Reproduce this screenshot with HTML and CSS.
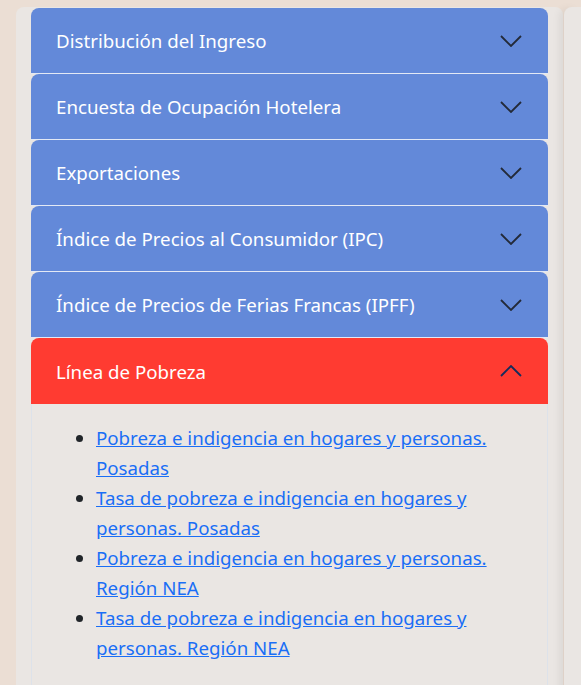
FILE: index.html
```html
<!DOCTYPE html>
<html lang="es">
<head>
<meta charset="utf-8">
<title>Estadísticas</title>
<link rel="stylesheet" href="styles.css">
</head>
<body>
<div class="page">
  <div class="card">
    <div class="accordion">
      <div class="item">
        <button class="header"><span>Distribución del Ingreso</span><svg class="chev" viewBox="0 0 22 12"><path d="M1 1 L11 11 L21 1"/></svg></button>
      </div>
      <div class="item">
        <button class="header"><span>Encuesta de Ocupación Hotelera</span><svg class="chev" viewBox="0 0 22 12"><path d="M1 1 L11 11 L21 1"/></svg></button>
      </div>
      <div class="item">
        <button class="header"><span>Exportaciones</span><svg class="chev" viewBox="0 0 22 12"><path d="M1 1 L11 11 L21 1"/></svg></button>
      </div>
      <div class="item">
        <button class="header"><span>Índice de Precios al Consumidor (IPC)</span><svg class="chev" viewBox="0 0 22 12"><path d="M1 1 L11 11 L21 1"/></svg></button>
      </div>
      <div class="item">
        <button class="header"><span>Índice de Precios de Ferias Francas (IPFF)</span><svg class="chev" viewBox="0 0 22 12"><path d="M1 1 L11 11 L21 1"/></svg></button>
      </div>
      <div class="item open">
        <button class="header active"><span>Línea de Pobreza</span><svg class="chev" viewBox="0 0 22 12"><path d="M1 11 L11 1 L21 11"/></svg></button>
        <div class="body">
          <ul class="links">
            <li><a href="#">Pobreza e indigencia en hogares y personas. Posadas</a></li>
            <li><a href="#">Tasa de pobreza e indigencia en hogares y personas. Posadas</a></li>
            <li><a href="#">Pobreza e indigencia en hogares y personas. Región NEA</a></li>
            <li><a href="#">Tasa de pobreza e indigencia en hogares y personas. Región NEA</a></li>
          </ul>
        </div>
      </div>
    </div>
  </div>
  <div class="side"></div>
</div>
</body>
</html>
```
FILE: styles.css
```css
html, body {
  margin: 0;
  padding: 0;
}
body {
  background: #ebded4;
  font-family: "Noto Sans", "Open Sans", sans-serif;
  overflow: hidden;
}
.page {
  display: flex;
  gap: 1px;
  padding: 7px 0 0 16px;
  height: 700px;
}
.card {
  flex: 0 0 547px;
  box-sizing: border-box;
  background: #eae6e3;
  border-radius: 8px 8px 0 0;
  padding: 1px 15px 0 15px;
}
.side {
  flex: 1;
  background: #eae6e3;
  border-radius: 8px 0 0 0;
  box-shadow: -6px 0 8px -2px rgba(0, 0, 0, 0.07);
}
.accordion {
  display: flex;
  flex-direction: column;
}
.header {
  display: flex;
  align-items: center;
  justify-content: space-between;
  width: 100%;
  height: 66px;
  box-sizing: border-box;
  padding: 0 26px 0 25px;
  border: 0;
  border-bottom: 1px solid #e3e9f5;
  border-radius: 8px 8px 0 0;
  background: #6389d9;
  color: #fff;
  font-family: inherit;
  font-size: 18.7px;
  text-align: left;
  cursor: pointer;
}
.header.active {
  background: #ff3b31;
  border-bottom: 0;
}
.chev {
  width: 22px;
  height: 12px;
  flex: 0 0 22px;
  fill: none;
  stroke: #232a38;
  stroke-width: 1.8;
}
.active .chev {
  stroke: #142c5c;
}
.body {
  border-left: 1px solid #dde2ea;
  border-right: 1px solid #dde2ea;
  padding: 19px 24px 30px 24px;
  background: #eae6e3;
}
.links {
  margin: 0;
  padding-left: 40px;
  font-size: 18.7px;
  line-height: 30px;
  color: #212529;
}
.links a {
  color: #1a6ef6;
  text-decoration: underline;
}
```
